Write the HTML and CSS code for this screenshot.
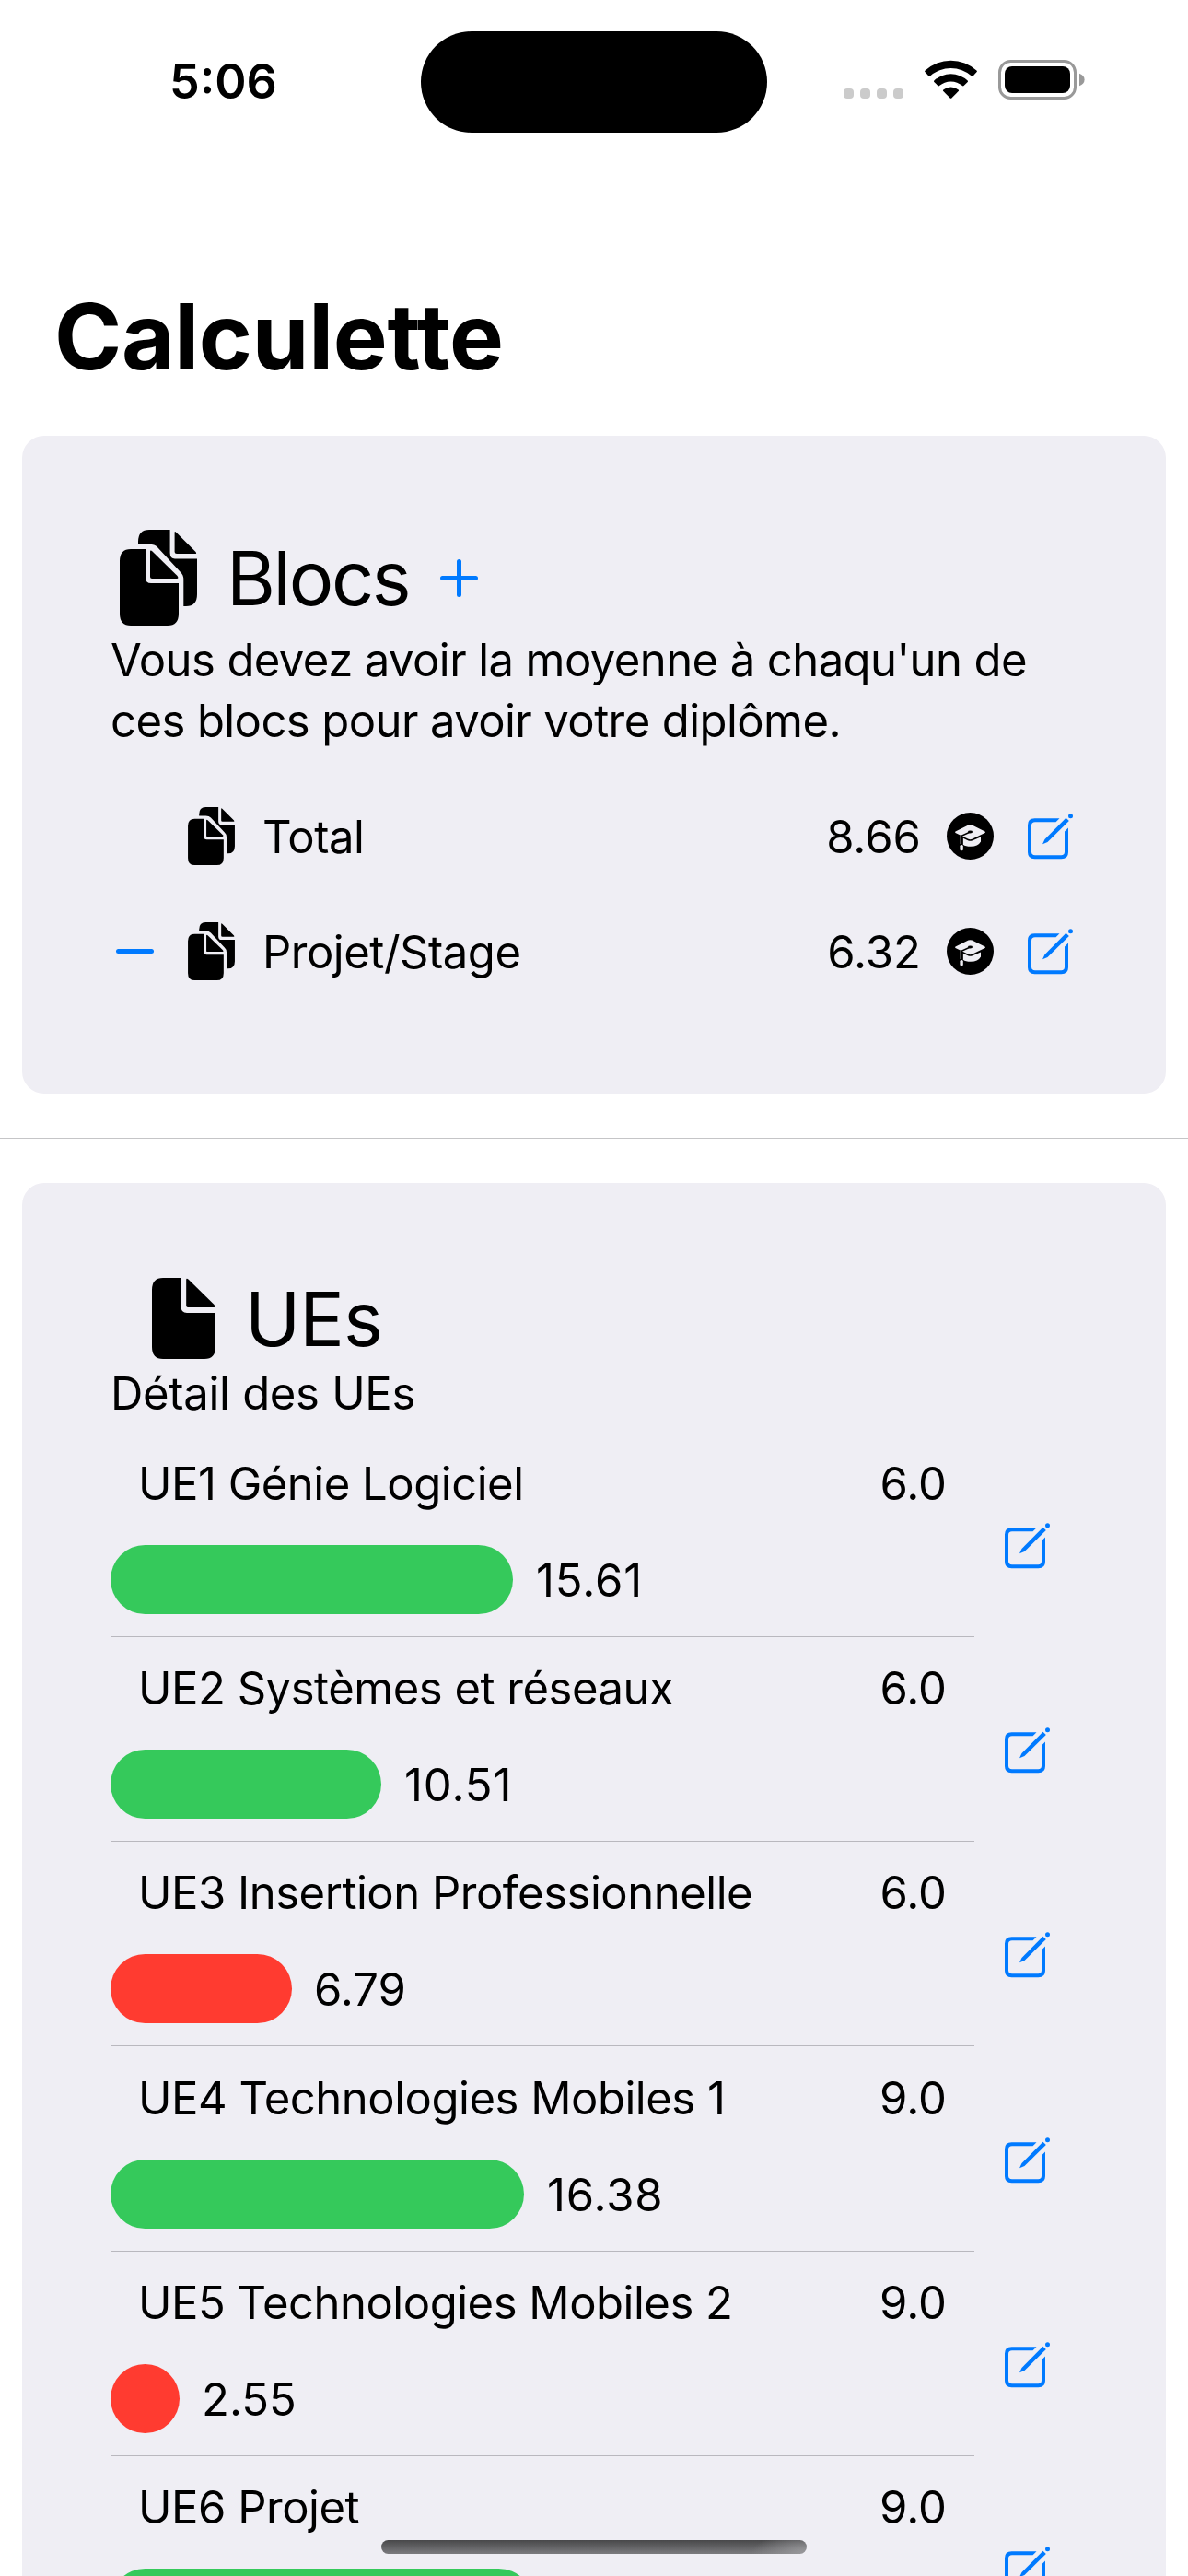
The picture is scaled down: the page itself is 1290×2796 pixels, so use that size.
FILE: index.html
```html
<!DOCTYPE html>
<html lang="fr">
<head>
<meta charset="utf-8">
<title>Calculette</title>
<link rel="stylesheet" href="styles.css">
</head>
<body>
<svg class="sprite" aria-hidden="true">
  <symbol id="docs" viewBox="0 0 84 104">
    <path d="M20 15.7V13Q20 0 32 0H54.6V25Q54.6 31.5 60 31.5H84V70Q84 83 72 83H69.3V54Q69.3 49 66 46L41 19Q38 15.7 32 15.7Z"/>
    <path d="M59.6 3Q59.6 1 61.5 3L82.5 24Q84 26 82 26H62Q59.6 26 59.6 24Z"/>
    <path d="M12 21H28V52Q28 58 34 58H64V91Q64 104 52 104H12Q0 104 0 91V34Q0 21 12 21Z"/>
    <path d="M33 24Q33 21.5 35.5 23.5L62.5 50Q64.5 53 62 53H35Q33 53 33 51Z"/>
  </symbol>
  <symbol id="doc" viewBox="0 0 69 88">
    <path d="M12 0H31.5V31Q31.5 38 38 38H69V75Q69 88 57 88H12Q0 88 0 75V13Q0 0 12 0Z"/>
    <path d="M37.2 2Q37.2 -.5 40 2L67.5 29Q69.5 32 67.5 32H40Q37.2 32 37.2 30Z"/>
  </symbol>
  <symbol id="edit" viewBox="0 0 49 50">
    <path d="M34.5 5.3L30.5 9.3H8Q4 9.3 4 13V41.5Q4 45.3 8 45.3H36.3Q40 45.3 40 41.5V19.5L44 15.5V42Q44 49.3 36.5 49.3H7.5Q0 49.3 0 42V12.5Q0 5.3 7.5 5.3Z"/>
    <path d="M16 33.2L18.5 28L41.5 4.8L44.8 8.1L21.5 31Z"/>
    <circle cx="46.5" cy="2.7" r="2.5"/>
  </symbol>
  <symbol id="cap" viewBox="0 0 51 51">
    <circle cx="25.5" cy="25.5" r="25.5"/>
    <g class="cap-light">
      <path d="M9.5 20.6L23.5 13.6Q25.5 12.8 27.5 13.6L41.5 20.4Q42.6 21.2 41.5 22L27.5 28.8Q25.5 29.6 23.5 28.8L9.5 22Q8.6 21.2 9.5 20.6Z"/>
      <path d="M17.8 27.8L23.5 30.4Q25.5 31.2 27.5 30.4L37 26.4V31.5Q34 36.8 26 36.8Q20.5 36.8 17.8 34.8Z"/>
      <path d="M14.7 25H16.3V34H14.7Z"/>
      <rect x="14.4" y="35" width="3.4" height="6.3" rx="1.5"/>
    </g>
    <path class="cap-cord" d="M25.5 21L16.6 25V34"/>
    <ellipse cx="25.5" cy="21" rx="2.6" ry="1.4"/>
  </symbol>
</svg>

<header class="status">
  <div class="status-left">5:06</div>
  <div class="island"></div>
  <div class="status-right">
    <div class="cell"><i></i><i></i><i></i><i></i></div>
    <svg class="wifi" viewBox="0 0 57 42"><path d="M.6 13.2Q-.4 12.4.6 11.6A41 41 0 0 1 56.4 11.6Q57.4 12.4 56.4 13.2L52.6 17.4Q51.8 18.2 51 17.5A34.3 34.3 0 0 0 6 17.5Q5.2 18.2 4.4 17.4Z"/><path d="M10.3 24Q9.6 23.3 10.3 22.5A26.5 26.5 0 0 1 46.7 22.5Q47.4 23.3 46.7 24L42.6 28Q41.8 28.8 41 28.1A19 19 0 0 0 16 28.1Q15.2 28.8 14.4 28Z"/><path d="M20.3 33.9Q19.6 33.1 20.3 32.4A13 13 0 0 1 36.7 32.4Q37.4 33.1 36.7 33.9L29.3 41.4Q28.5 42.2 27.7 41.4Z"/></svg>
    <svg class="battery" viewBox="0 0 94 43"><rect x="1.5" y="1.5" width="82" height="40" rx="12" fill="none" stroke="#999" stroke-width="3"/><rect x="7" y="7" width="71" height="29" rx="8"/><path d="M88 14.8Q93.6 17 93.6 21.5T88 28.2Z" fill="#999"/></svg>
  </div>
</header>

<main>
  <h1>Calculette</h1>

  <section class="card blocs">
    <div class="card-head">
      <svg class="docs-big"><use href="#docs"/></svg>
      <h2>Blocs</h2>
      <svg class="plus" viewBox="0 0 41 41"><path d="M2.5 20.5H38.5M20.5 2.5V38.5"/></svg>
    </div>
    <p class="intro">Vous devez avoir la moyenne à chaqu'un de<br>ces blocs pour avoir votre diplôme.</p>
    <div class="bloc">
      <span class="minus"></span>
      <svg class="docs-small"><use href="#docs"/></svg>
      <span class="bloc-name">Total</span>
      <span class="num">8.66</span>
      <svg class="cap"><use href="#cap"/></svg>
      <svg class="edit"><use href="#edit"/></svg>
    </div>
    <div class="bloc">
      <span class="minus shown"></span>
      <svg class="docs-small"><use href="#docs"/></svg>
      <span class="bloc-name">Projet/Stage</span>
      <span class="num">6.32</span>
      <svg class="cap"><use href="#cap"/></svg>
      <svg class="edit"><use href="#edit"/></svg>
    </div>
  </section>

  <hr>

  <section class="card ues">
    <div class="card-head">
      <svg class="doc-big"><use href="#doc"/></svg>
      <h2>UEs</h2>
    </div>
    <p class="detail">Détail des UEs</p>
    <div class="list">
      <div class="ue">
        <div class="ue-main">
          <div class="ue-top"><span>UE1 Génie Logiciel</span><span class="num">6.0</span></div>
          <div class="ue-score"><span class="bar" style="width:437px"></span><span class="num wide">15.61</span></div>
        </div>
        <svg class="edit"><use href="#edit"/></svg>
      </div>
      <div class="ue">
        <div class="ue-main">
          <div class="ue-top"><span>UE2 Systèmes et réseaux</span><span class="num">6.0</span></div>
          <div class="ue-score"><span class="bar" style="width:294px"></span><span class="num wide">10.51</span></div>
        </div>
        <svg class="edit"><use href="#edit"/></svg>
      </div>
      <div class="ue">
        <div class="ue-main">
          <div class="ue-top"><span>UE3 Insertion Professionnelle</span><span class="num">6.0</span></div>
          <div class="ue-score"><span class="bar low" style="width:197px"></span><span class="num">6.79</span></div>
        </div>
        <svg class="edit"><use href="#edit"/></svg>
      </div>
      <div class="ue">
        <div class="ue-main">
          <div class="ue-top"><span>UE4 Technologies Mobiles 1</span><span class="num">9.0</span></div>
          <div class="ue-score"><span class="bar" style="width:449px"></span><span class="num wide">16.38</span></div>
        </div>
        <svg class="edit"><use href="#edit"/></svg>
      </div>
      <div class="ue">
        <div class="ue-main">
          <div class="ue-top"><span>UE5 Technologies Mobiles 2</span><span class="num">9.0</span></div>
          <div class="ue-score"><span class="bar low" style="width:75px"></span><span class="num">2.55</span></div>
        </div>
        <svg class="edit"><use href="#edit"/></svg>
      </div>
      <div class="ue">
        <div class="ue-main">
          <div class="ue-top"><span>UE6 Projet</span><span class="num">9.0</span></div>
          <div class="ue-score"><span class="bar" style="width:459px"></span></div>
        </div>
        <svg class="edit"><use href="#edit"/></svg>
      </div>
    </div>
  </section>
</main>
<div class="home-indicator"></div>
</body>
</html>
```

FILE: styles.css
```css
* { box-sizing: border-box; margin: 0; padding: 0; }

html { height: 2796px; overflow: hidden; }

body {
  position: relative;
  width: 1290px;
  height: 2796px;
  overflow: hidden;
  background: #fff;
  color: #000;
  font-family: Inter, "Liberation Sans", sans-serif;
  font-size: 49px;
  letter-spacing: -0.48px;
}

svg { display: block; flex: none; }
.sprite { display: none; }

/* Status bar */
.status { display: flex; height: 177px; padding-top: 34px; }
.status-left {
  width: 457px;
  padding-left: 184px;
  font-size: 52px;
  font-weight: 600;
  line-height: 109px;
  letter-spacing: 0;
}
.island { width: 376px; height: 110px; border-radius: 55px; background: #000; }
.status-right { display: flex; align-items: flex-end; height: 74px; padding-left: 83px; }
.cell { display: flex; gap: 7px; margin: 0 23px 1px 0; }
.cell i { width: 11px; height: 11px; border-radius: 4px; background: #cbcbcb; }
.wifi { width: 57px; height: 42px; margin: 0 23px 1px 0; }
.battery { width: 94px; height: 43px; }

h1 {
  margin: 128px 0 48px 59px;
  font-size: 99px;
  font-weight: 700;
  line-height: 120px;
  letter-spacing: -0.25px;
}

/* Cards */
.card { margin: 0 24px; padding: 102px 96px 0; border-radius: 24px; background: #efeef4; }
.blocs { height: 714px; }
.ues { height: 1600px; padding-top: 103px; }
hr { height: 1px; margin: 48px 0; border: 0; background: #c5c5c7; }

.card-head { display: flex; align-items: center; gap: 33px; }
.blocs .card-head { height: 104px; padding-left: 10px; }
.ues .card-head { height: 88px; padding-left: 45px; gap: 32px; }
h2 { padding-top: 1px; font-size: 81px; font-weight: 400; line-height: 88px; }
.blocs h2 { margin-left: -1px; margin-right: 1px; letter-spacing: -2.4px; }
.ues h2 { letter-spacing: -1px; }
.docs-big { width: 84px; height: 104px; }
.doc-big { width: 69px; height: 88px; }
.plus { width: 41px; height: 41px; }
.plus path { stroke: #007aff; stroke-width: 5; stroke-linecap: round; }

.intro { margin: 5px 0 29px; line-height: 66px; letter-spacing: -0.58px; white-space: nowrap; }

.bloc { display: flex; align-items: center; height: 125px; padding-left: 6px; }
.minus { width: 41px; height: 5px; margin-right: 37px; border-radius: 3px; }
.shown { background: #007aff; }
.docs-small { width: 51px; height: 63px; }
.bloc-name { flex: 1; margin-left: 30px; padding-top: 2px; }
.num { letter-spacing: 0; }
.bloc .num, .ue-score .num { padding-top: 2px; }
.wide { margin-left: 1px; letter-spacing: 0.9px; }
.cap { width: 51px; height: 51px; margin: 0 37px 0 28px; }
.cap-light { fill: #efeef4; }
.cap-cord { fill: none; stroke: #000; stroke-width: 1.4; }
.edit { width: 49px; height: 50px; fill: #007aff; }
.bloc .edit { margin-right: 5px; }

/* UE list */
.detail { margin: 5px 0 33px; line-height: 66px; letter-spacing: -0.3px; }
.list { display: flex; flex-direction: column; gap: 24.2px; }
.ue {
  display: flex;
  align-items: center;
  gap: 33px;
  height: 198px;
  border-right: 1px solid #b9b8be;
}
.ue-main { width: 938px; height: 198px; border-bottom: 1px solid #b9b8be; }
.ue-top { display: flex; justify-content: space-between; padding: 1px 30px 0; line-height: 62px; white-space: nowrap; }
.ue-score { display: flex; align-items: center; gap: 24px; height: 75px; margin-top: 35px; }
.bar { height: 75px; border-radius: 38px; background: #35c95b; }
.low { background: #ff3b30; }

.home-indicator {
  position: absolute;
  left: 414px;
  top: 2757px;
  width: 462px;
  height: 15px;
  border-radius: 8px;
  background:
    radial-gradient(ellipse 60px 24px at 100% 100%, #9a9a9d, rgba(154, 154, 157, 0)),
    linear-gradient(#48484a, #7b7b7e);
}
```
